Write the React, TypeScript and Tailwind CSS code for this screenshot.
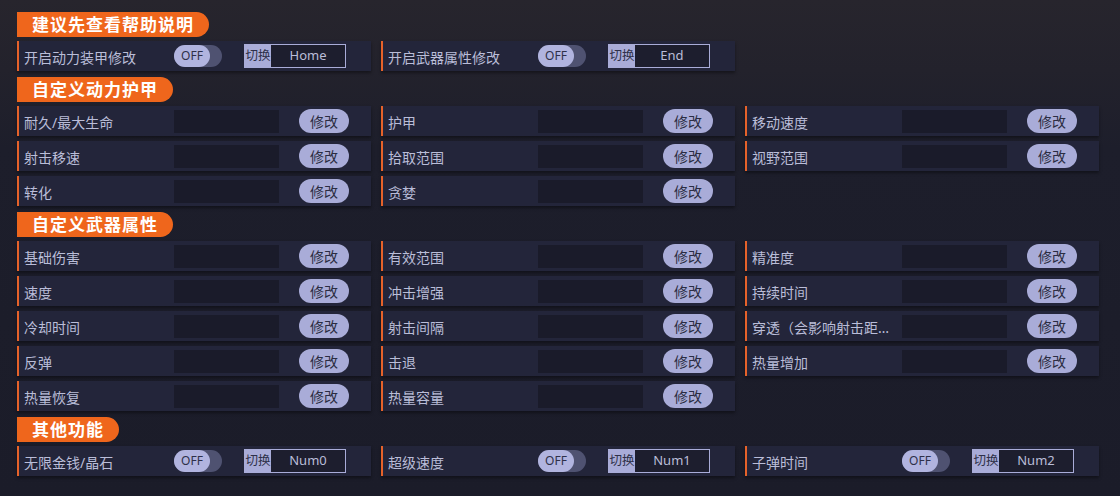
import React from "react";

const FONT = { fontFamily: '"Noto Sans", "Noto Sans CJK SC", sans-serif' };

function Header({ title }: { title: string }) {
  return (
    <div className="flex">
      <div className="h-[25px] flex items-center pl-[15px] pr-[15px] bg-[#ef661c] rounded-tl-[8px] rounded-bl-[2px] rounded-r-full text-white text-[17px] font-bold tracking-[1px] leading-none">
        {title}
      </div>
    </div>
  );
}

function Row({ children, label }: { children?: React.ReactNode; label: string }) {
  return (
    <div className="h-[30px] flex items-center border-l-2 border-[#e6622a] bg-[#23253a] shadow-[0_2px_3px_rgba(0,0,0,0.4)]">
      <div className="w-[155px] shrink-0 pl-[5px] pr-[8px] pt-[2px] text-[14px] text-[#babdd8] truncate">{label}</div>
      {children}
    </div>
  );
}

function EditRow({ label }: { label: string }) {
  return (
    <Row label={label}>
      <div className="w-[105px] h-[23px] bg-[#1a1b2a]" />
      <div className="ml-[20px] w-[50px] h-[24px] rounded-full bg-[#a9acd8] flex items-center justify-center text-[14px] text-[#2b2d42]">
        修改
      </div>
    </Row>
  );
}

function ToggleRow({ label, hotkey }: { label: string; hotkey: string }) {
  return (
    <Row label={label}>
      <div className="w-[48px] h-[22px] rounded-full bg-[#4f5271] flex">
        <div className="w-[36px] h-[22px] rounded-full bg-[#b1b4df] flex items-center justify-center text-[12px] text-[#2e3049]">
          OFF
        </div>
      </div>
      <div className="ml-[22px] w-[102px] h-[24px] border border-[#a9acd8] flex">
        <div className="w-[26px] h-full bg-[#a9acd8] flex items-center justify-center text-[12.5px] text-[#2e3049]">
          切换
        </div>
        <div className="flex-1 bg-[#1d1e2e] flex items-center justify-center text-[13px] text-[#babdd8]">
          {hotkey}
        </div>
      </div>
    </Row>
  );
}

export default function App() {
  return (
    <div
      className="w-[1120px] h-[496px] overflow-hidden bg-[linear-gradient(180deg,#27252d_0%,#23222c_14%,#1d1e2b_30%,#1b1c29_100%)] pl-[17px] pt-[12px]"
      style={FONT}
    >
      <div className="w-[1082px] flex flex-col">
        <Header title="建议先查看帮助说明" />
        <div className="mt-[4px] grid grid-cols-[354px_354px_354px] gap-x-[10px]">
          <ToggleRow label="开启动力装甲修改" hotkey="Home" />
          <ToggleRow label="开启武器属性修改" hotkey="End" />
        </div>

        <div className="mt-[6px]">
          <Header title="自定义动力护甲" />
        </div>
        <div className="mt-[4px] grid grid-cols-[354px_354px_354px] gap-x-[10px] gap-y-[5px]">
          <EditRow label="耐久/最大生命" />
          <EditRow label="护甲" />
          <EditRow label="移动速度" />
          <EditRow label="射击移速" />
          <EditRow label="拾取范围" />
          <EditRow label="视野范围" />
          <EditRow label="转化" />
          <EditRow label="贪婪" />
        </div>

        <div className="mt-[6px]">
          <Header title="自定义武器属性" />
        </div>
        <div className="mt-[4px] grid grid-cols-[354px_354px_354px] gap-x-[10px] gap-y-[5px]">
          <EditRow label="基础伤害" />
          <EditRow label="有效范围" />
          <EditRow label="精准度" />
          <EditRow label="速度" />
          <EditRow label="冲击增强" />
          <EditRow label="持续时间" />
          <EditRow label="冷却时间" />
          <EditRow label="射击间隔" />
          <EditRow label="穿透（会影响射击距离）" />
          <EditRow label="反弹" />
          <EditRow label="击退" />
          <EditRow label="热量增加" />
          <EditRow label="热量恢复" />
          <EditRow label="热量容量" />
        </div>

        <div className="mt-[6px]">
          <Header title="其他功能" />
        </div>
        <div className="mt-[4px] grid grid-cols-[354px_354px_354px] gap-x-[10px]">
          <ToggleRow label="无限金钱/晶石" hotkey="Num0" />
          <ToggleRow label="超级速度" hotkey="Num1" />
          <ToggleRow label="子弹时间" hotkey="Num2" />
        </div>
      </div>
    </div>
  );
}
